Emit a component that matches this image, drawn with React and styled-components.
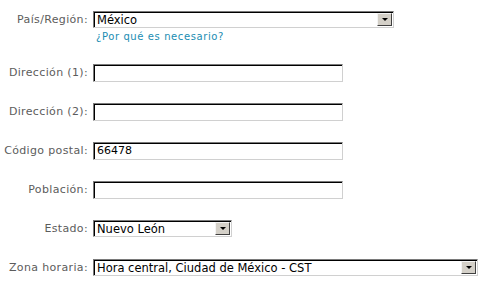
import React from 'react';
import styled, { createGlobalStyle } from 'styled-components';

const GlobalStyle = createGlobalStyle`
  body {
    margin: 0;
    background: #ffffff;
    font-family: "DejaVu Sans", Verdana, sans-serif;
  }
`;

const Form = styled.div`
  display: flex;
  flex-direction: column;
  gap: 21px;
  padding-top: 11px;
  width: 481px;
`;

const Row = styled.div`
  display: grid;
  grid-template-columns: 88px auto;
  column-gap: 5px;
  align-items: start;
`;

const Label = styled.label`
  font-size: 11px;
  letter-spacing: 0.35px;
  color: #5c5c5c;
  text-align: right;
  white-space: nowrap;
  line-height: 18px;
`;

const Field = styled.div`
  display: flex;
  flex-direction: column;
  align-items: flex-start;
`;

const Input = styled.div`
  box-sizing: border-box;
  width: ${p => p.w}px;
  height: 18px;
  border-top: 1px solid #7a7a7a;
  border-left: 1px solid #7a7a7a;
  border-right: 1px solid #d0d0d0;
  border-bottom: 1px solid #d0d0d0;
  box-shadow: inset 1px 1px 0 #000000;
  background: #ffffff;
  font-size: 11px;
  color: #000000;
  line-height: 16px;
  padding-left: 3px;
  white-space: nowrap;
`;

const Select = styled(Input)`
  display: flex;
  align-items: center;
  justify-content: space-between;
  height: 17px;
  padding-right: 1px;
  font-size: 11.5px;
`;

const Arrow = styled.div`
  box-sizing: border-box;
  width: 15px;
  height: 13px;
  background: #d4d0c8;
  border-top: 1px solid #f4f4f4;
  border-left: 1px solid #f4f4f4;
  border-right: 1px solid #404040;
  border-bottom: 1px solid #404040;
  display: flex;
  align-items: center;
  justify-content: center;

  &::after {
    content: '';
    border-left: 3px solid transparent;
    border-right: 3px solid transparent;
    border-top: 3px solid #000000;
  }
`;

const Help = styled.a`
  font-size: 10px;
  letter-spacing: 0.6px;
  color: #1a8db2;
  text-decoration: none;
  margin-top: 3px;
  margin-left: 3px;
  line-height: 12px;
`;

const TextRow = ({ label, value = '' }) => (
  <Row>
    <Label>{label}</Label>
    <Input w={250}>{value}</Input>
  </Row>
);

const SelectRow = ({ label, value, w, children }) => (
  <Row>
    <Label>{label}</Label>
    <Field>
      <Select w={w}>
        <span>{value}</span>
        <Arrow />
      </Select>
      {children}
    </Field>
  </Row>
);

export default function App() {
  return (
    <>
      <GlobalStyle />
      <Form>
        <SelectRow label="País/Región:" value="México" w={301}>
          <Help href="#">¿Por qué es necesario?</Help>
        </SelectRow>
        <TextRow label="Dirección (1):" />
        <TextRow label="Dirección (2):" />
        <TextRow label="Código postal:" value="66478" />
        <TextRow label="Población:" />
        <SelectRow label="Estado:" value="Nuevo León" w={139} />
        <SelectRow label="Zona horaria:" value="Hora central, Ciudad de México - CST" w={385} />
      </Form>
    </>
  );
}
